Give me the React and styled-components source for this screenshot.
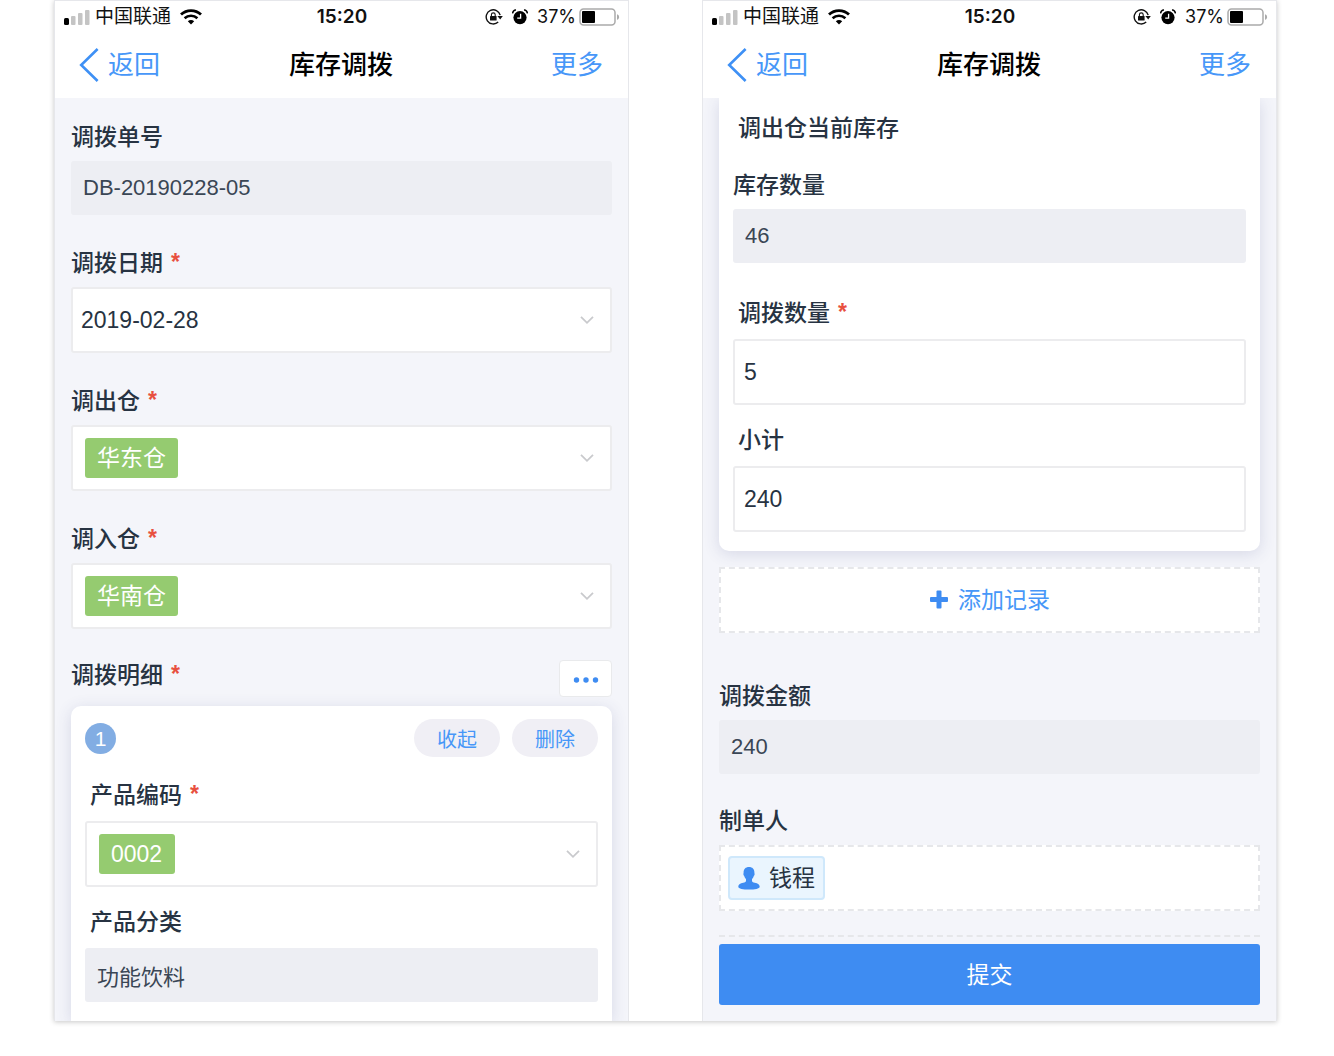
import React from "react";
import styled, { createGlobalStyle } from "styled-components";

const GlobalStyle = createGlobalStyle`
  * {
    box-sizing: border-box;
  }
  body {
    margin: 0;
    background: #fff;
    color: #273342;
    font-family: "Liberation Sans", "Noto Sans CJK SC", sans-serif;
  }
  button, input, select {
    margin: 0;
    padding: 0;
    border: 0;
    background: none;
    color: inherit;
    font-family: inherit;
  }
`;

const Page = styled.div`
  padding: 0 57px 35px 54px;
`;

const Sheet = styled.main`
  display: grid;
  grid-template-columns: 1fr 1fr;
  gap: 73px;
  box-shadow: 0 1px 5px rgba(0, 0, 0, 0.22);
`;

const Phone = styled.section`
  display: flex;
  flex-direction: column;
  border: 1px solid #e6e7eb;
  border-bottom: 0;
`;

const StatusBar = styled.div`
  display: grid;
  grid-template-columns: 1fr auto 1fr;
  align-items: center;
  height: 31px;
  padding: 0 8px 0 9px;
  color: #111;
  font-size: 18px;
`;

const StatusGroup = styled.div`
  display: flex;
  align-items: center;
  justify-content: ${(props) => (props.$end ? "flex-end" : "flex-start")};
  gap: 9px;
`;

const Carrier = styled.span`
  display: flex;
  align-items: center;
  gap: 5px;
  font-size: 19px;
  line-height: 26px;
`;

const Time = styled.span`
  font-family: Inter, sans-serif;
  font-size: 19px;
  font-weight: 600;
`;

const Battery = styled.span`
  display: flex;
  align-items: center;
  gap: 3px;
  font-family: Inter, sans-serif;
`;

const NavBar = styled.header`
  display: grid;
  grid-template-columns: 1fr auto 1fr;
  align-items: center;
  height: 66px;
  padding: 0 25px 0 24px;
`;

const NavLink = styled.a`
  display: flex;
  align-items: center;
  justify-self: ${(props) => (props.$end ? "end" : "start")};
  gap: 9px;
  color: #4797f8;
  font-size: 26px;
  line-height: 34px;
  text-decoration: none;
`;

const Title = styled.h1`
  margin: 0;
  color: #000;
  font-size: 26px;
  font-weight: 500;
  line-height: 34px;
`;

const Form = styled.form`
  flex: 1;
  padding: ${(props) => (props.$scrolled ? "0 16px 16px" : "24px 16px 0")};
  overflow: hidden;
  background: #f4f5fa;
`;

const FieldWrap = styled.div`
  margin-top: ${(props) => props.$top};
`;

const labelStyle = `
  display: flex;
  align-items: center;
  gap: 8px;
  line-height: 30px;
  font-size: 23px;
  font-weight: 500;
`;

const Label = styled.label`
  ${labelStyle}
  margin-bottom: ${(props) => (props.$inset ? "11px" : "9px")};
  padding-left: ${(props) => (props.$inset ? "5px" : "0")};
`;

const Heading = styled.h2`
  ${labelStyle}
  margin: 0;
  padding-left: ${(props) => (props.$inset ? "5px" : "0")};
`;

const Star = styled.span`
  align-self: flex-start;
  color: #e8503f;
  font-weight: 700;
  line-height: 28px;
`;

const ReadOnlyInput = styled.input`
  display: block;
  width: 100%;
  height: 54px;
  padding: 0 12px;
  border-radius: 3px;
  background: #edeef3;
  color: #3a4655;
  font-size: 22px;
  outline: none;
`;

const TextInput = styled.input`
  display: block;
  width: 100%;
  height: 66px;
  padding: 0 9px;
  border: 2px solid #ececee;
  border-radius: 3px;
  background: #fff;
  font-size: 23px;
`;

const SelectBox = styled.div`
  display: flex;
  align-items: center;
  justify-content: space-between;
  height: 66px;
  padding: 0 16px 0 ${(props) => (props.$tag ? "12px" : "8px")};
  border: 2px solid #ececee;
  border-radius: 3px;
  background: #fff;
`;

const PlainSelect = styled.select`
  flex: 1;
  appearance: none;
  font-size: 23px;
`;

const TagSelect = styled.select`
  appearance: none;
  height: 40px;
  padding: 0 12px;
  border-radius: 3px;
  background: #95cb70;
  color: #fff;
  font-size: 23px;
`;

const DetailHead = styled.div`
  display: flex;
  align-items: flex-start;
  justify-content: space-between;
  margin: 31px 0 9px;
`;

const MoreButton = styled.button`
  display: flex;
  align-items: center;
  justify-content: center;
  width: 53px;
  height: 37px;
  border: 1px solid #e9eaec;
  border-radius: 4px;
  background: #fff;
`;

const Card = styled.div`
  padding: ${(props) => (props.$scrolled ? "15px" : "13px")} 14px 19px;
  border-radius: ${(props) => (props.$scrolled ? "0 0 10px 10px" : "10px 10px 0 0")};
  background: #fff;
  box-shadow: 0 3px 16px rgba(60, 70, 130, 0.16);
`;

const CardHead = styled.div`
  display: flex;
  align-items: center;
  gap: 12px;
  height: 38px;
`;

const Index = styled.span`
  width: 31px;
  margin-right: auto;
  border-radius: 50%;
  background: #82ade3;
  color: #fff;
  font-size: 21px;
  line-height: 31px;
  text-align: center;
`;

const Pill = styled.button`
  width: 86px;
  height: 38px;
  border-radius: 19px;
  background: #f0eff5;
  color: #4797f8;
  font-size: 20px;
`;

const AddButton = styled.button`
  display: flex;
  align-items: center;
  justify-content: center;
  gap: 9px;
  width: 100%;
  height: 66px;
  margin-top: 16px;
  border: 2px dashed #e6e7ea;
  background: #fff;
  color: #4797f8;
  font-size: 23px;
  line-height: 30px;
`;

const PeopleBox = styled.div`
  display: flex;
  align-items: center;
  height: 66px;
  padding: 0 7px;
  border: 2px dashed #e6e7ea;
  background: #fff;
`;

const Person = styled.span`
  display: flex;
  align-items: center;
  gap: 9px;
  height: 44px;
  padding: 0 8px;
  border: 2px solid #cfe8fb;
  border-radius: 4px;
  background: #eaf5fe;
  font-size: 23px;
  line-height: 30px;
`;

const Footer = styled.div`
  margin-top: 24px;
  padding-top: 7px;
  border-top: 2px dashed #e6e7ea;
`;

const SubmitButton = styled.button`
  display: block;
  width: 100%;
  height: 61px;
  border-radius: 3px;
  background: #3e8cf2;
  color: #fff;
  font-size: 23px;
  line-height: 30px;
`;

const SignalIcon = () => (
  <svg width="26" height="16" viewBox="0 0 26 16" aria-hidden="true">
    <rect x="0" y="9" width="5" height="7" rx="1.5" fill="#000" />
    <rect x="7" y="7" width="4.5" height="9" rx="1" fill="#c4c4c4" />
    <rect x="14" y="4" width="4.5" height="12" rx="1" fill="#c4c4c4" />
    <rect x="21" y="1" width="4.5" height="15" rx="1" fill="#c4c4c4" />
  </svg>
);

const WifiIcon = () => (
  <svg width="22" height="16" viewBox="0 0 22 16" fill="none" stroke="#000" aria-hidden="true">
    <path d="M1 5.6C6.6.2 15.4.2 21 5.6" strokeWidth="2.8" />
    <path d="M4.6 9.3c3.6-3.4 9.2-3.4 12.8 0" strokeWidth="2.6" />
    <path d="M11 15.5l-3.2-3.3c1.8-1.6 4.6-1.6 6.4 0z" fill="#000" stroke="none" />
  </svg>
);

const LockIcon = () => (
  <svg width="18" height="16" viewBox="0 0 18 16" fill="none" stroke="#111" aria-hidden="true">
    <path d="M15.2 6.2A7.1 7.1 0 1 0 13.2 13" strokeWidth="1.4" />
    <path d="M12.4 7h5.4l-2.6 3.6z" fill="#111" stroke="none" />
    <rect x="5" y="7" width="6.6" height="4.6" rx=".6" fill="#111" stroke="none" />
    <path d="M6.4 7V5.8a1.9 1.9 0 0 1 3.8 0V7" strokeWidth="1.1" />
  </svg>
);

const AlarmIcon = () => (
  <svg width="16" height="16" viewBox="0 0 16 16" aria-hidden="true">
    <circle cx="8" cy="8.6" r="6.6" fill="#000" />
    <path d="M.8 4.4A3 3 0 0 1 4 1M15.2 4.4A3 3 0 0 0 12 1" fill="none" stroke="#000" strokeWidth="1.6" />
    <path d="M8.6 4.8v4.4H5.2" fill="none" stroke="#fff" strokeWidth="1.3" />
  </svg>
);

const BatteryIcon = () => (
  <svg width="41" height="18" viewBox="0 0 41 18" aria-hidden="true">
    <rect x="1" y="1" width="35" height="16" rx="3.5" fill="#fff" stroke="#aaa" strokeWidth="1.5" />
    <rect x="3" y="3" width="13" height="12" rx="1" fill="#000" />
    <path d="M38 6.2c2.8.8 2.8 4.8 0 5.6z" fill="#aaa" />
  </svg>
);

const BackIcon = () => (
  <svg width="20" height="34" viewBox="0 0 20 34" fill="none" stroke="#3e90f5" strokeWidth="2.6" aria-hidden="true">
    <path d="M18.6 1L2.2 17l16.4 16" />
  </svg>
);

const DownIcon = () => (
  <svg width="14" height="10" viewBox="0 0 14 10" fill="none" stroke="#c9cacd" strokeWidth="1.8" aria-hidden="true">
    <path d="M1 1.8l6 6 6-6" />
  </svg>
);

const DotsIcon = () => (
  <svg width="26" height="8" viewBox="0 0 26 8" fill="#3e8cf2" aria-hidden="true">
    <circle cx="3.5" cy="5" r="2.7" />
    <circle cx="13" cy="5" r="2.7" />
    <circle cx="22.5" cy="5" r="2.7" />
  </svg>
);

const PlusIcon = () => (
  <svg width="20" height="20" viewBox="0 0 20 20" fill="#3e8cf2" aria-hidden="true">
    <rect x="1" y="7" width="18" height="5" rx="1" />
    <rect x="7.5" y="0.5" width="5" height="18" rx="1" />
  </svg>
);

const PersonIcon = () => (
  <svg width="22" height="24" viewBox="0 0 22 24" fill="#3e8cf2" aria-hidden="true">
    <path d="M11 1c3.4 0 5.4 2.2 5.4 5.4 0 .7.3 1.1.2 2-.1.8-.7 1.1-.9 1.8-.4 1.3-1 2.2-1.7 2.9v1.7c0 1 .7 1.4 1.7 1.7 2.8.6 6 1.3 6 4.2 0 2-5 2.800-10.7 2.800S.3 22.700.3 20.700c0-2.900 3.200-3.600 6-4.200 1-.3 1.700-.7 1.700-1.700v-1.700c-.7-.7-1.300-1.600-1.700-2.900-.2-.7-.8-1-.9-1.800-.1-.9.2-1.300.2-2C5.600 3.200 7.600 1 11 1z" />
  </svg>
);

const Header = () => (
  <>
    <StatusBar>
      <StatusGroup>
        <Carrier><SignalIcon />中国联通</Carrier>
        <WifiIcon />
      </StatusGroup>
      <Time>15:20</Time>
      <StatusGroup $end>
        <LockIcon />
        <AlarmIcon />
        <Battery>37% <BatteryIcon /></Battery>
      </StatusGroup>
    </StatusBar>
    <NavBar>
      <NavLink href="#back"><BackIcon />返回</NavLink>
      <Title>库存调拨</Title>
      <NavLink href="#more" $end>更多</NavLink>
    </NavBar>
  </>
);

const Field = ({ id, label, required, inset, top = "33px", children }) => (
  <FieldWrap $top={top}>
    <Label htmlFor={id} $inset={inset}>
      {label}
      {required && <Star>*</Star>}
    </Label>
    {children}
  </FieldWrap>
);

const TagField = ({ id, value }) => (
  <SelectBox $tag>
    <TagSelect id={id}>
      <option>{value}</option>
    </TagSelect>
    <DownIcon />
  </SelectBox>
);

const OrderForm = () => (
  <Form>
    <Field id="orderNo" label="调拨单号" top="0">
      <ReadOnlyInput id="orderNo" value="DB-20190228-05" readOnly />
    </Field>
    <Field id="date" label="调拨日期" required>
      <SelectBox>
        <PlainSelect id="date">
          <option>2019-02-28</option>
        </PlainSelect>
        <DownIcon />
      </SelectBox>
    </Field>
    <Field id="from" label="调出仓" required>
      <TagField id="from" value="华东仓" />
    </Field>
    <Field id="to" label="调入仓" required>
      <TagField id="to" value="华南仓" />
    </Field>
    <DetailHead>
      <Heading>调拨明细<Star>*</Star></Heading>
      <MoreButton type="button" aria-label="更多操作"><DotsIcon /></MoreButton>
    </DetailHead>
    <Card>
      <CardHead>
        <Index>1</Index>
        <Pill type="button">收起</Pill>
        <Pill type="button">删除</Pill>
      </CardHead>
      <Field id="code" label="产品编码" required inset top="23px">
        <TagField id="code" value="0002" />
      </Field>
      <Field id="category" label="产品分类" inset top="20px">
        <ReadOnlyInput id="category" value="功能饮料" readOnly />
      </Field>
    </Card>
  </Form>
);

const StockForm = () => (
  <Form $scrolled>
    <Card $scrolled>
      <Heading $inset>调出仓当前库存</Heading>
      <Field id="stock" label="库存数量" top="27px">
        <ReadOnlyInput id="stock" value="46" readOnly />
      </Field>
      <Field id="count" label="调拨数量" required inset top="35px">
        <TextInput id="count" defaultValue="5" />
      </Field>
      <Field id="subtotal" label="小计" inset top="20px">
        <TextInput id="subtotal" defaultValue="240" />
      </Field>
    </Card>
    <AddButton type="button"><PlusIcon />添加记录</AddButton>
    <Field id="amount" label="调拨金额" top="48px">
      <ReadOnlyInput id="amount" value="240" readOnly />
    </Field>
    <Field label="制单人" top="32px">
      <PeopleBox>
        <Person><PersonIcon />钱程</Person>
      </PeopleBox>
    </Field>
    <Footer>
      <SubmitButton type="submit">提交</SubmitButton>
    </Footer>
  </Form>
);

const App = () => {
  return (
    <>
      <GlobalStyle />
      <Page>
        <Sheet>
          <Phone>
            <Header />
            <OrderForm />
          </Phone>
          <Phone>
            <Header />
            <StockForm />
          </Phone>
        </Sheet>
      </Page>
    </>
  );
};

export default App;
